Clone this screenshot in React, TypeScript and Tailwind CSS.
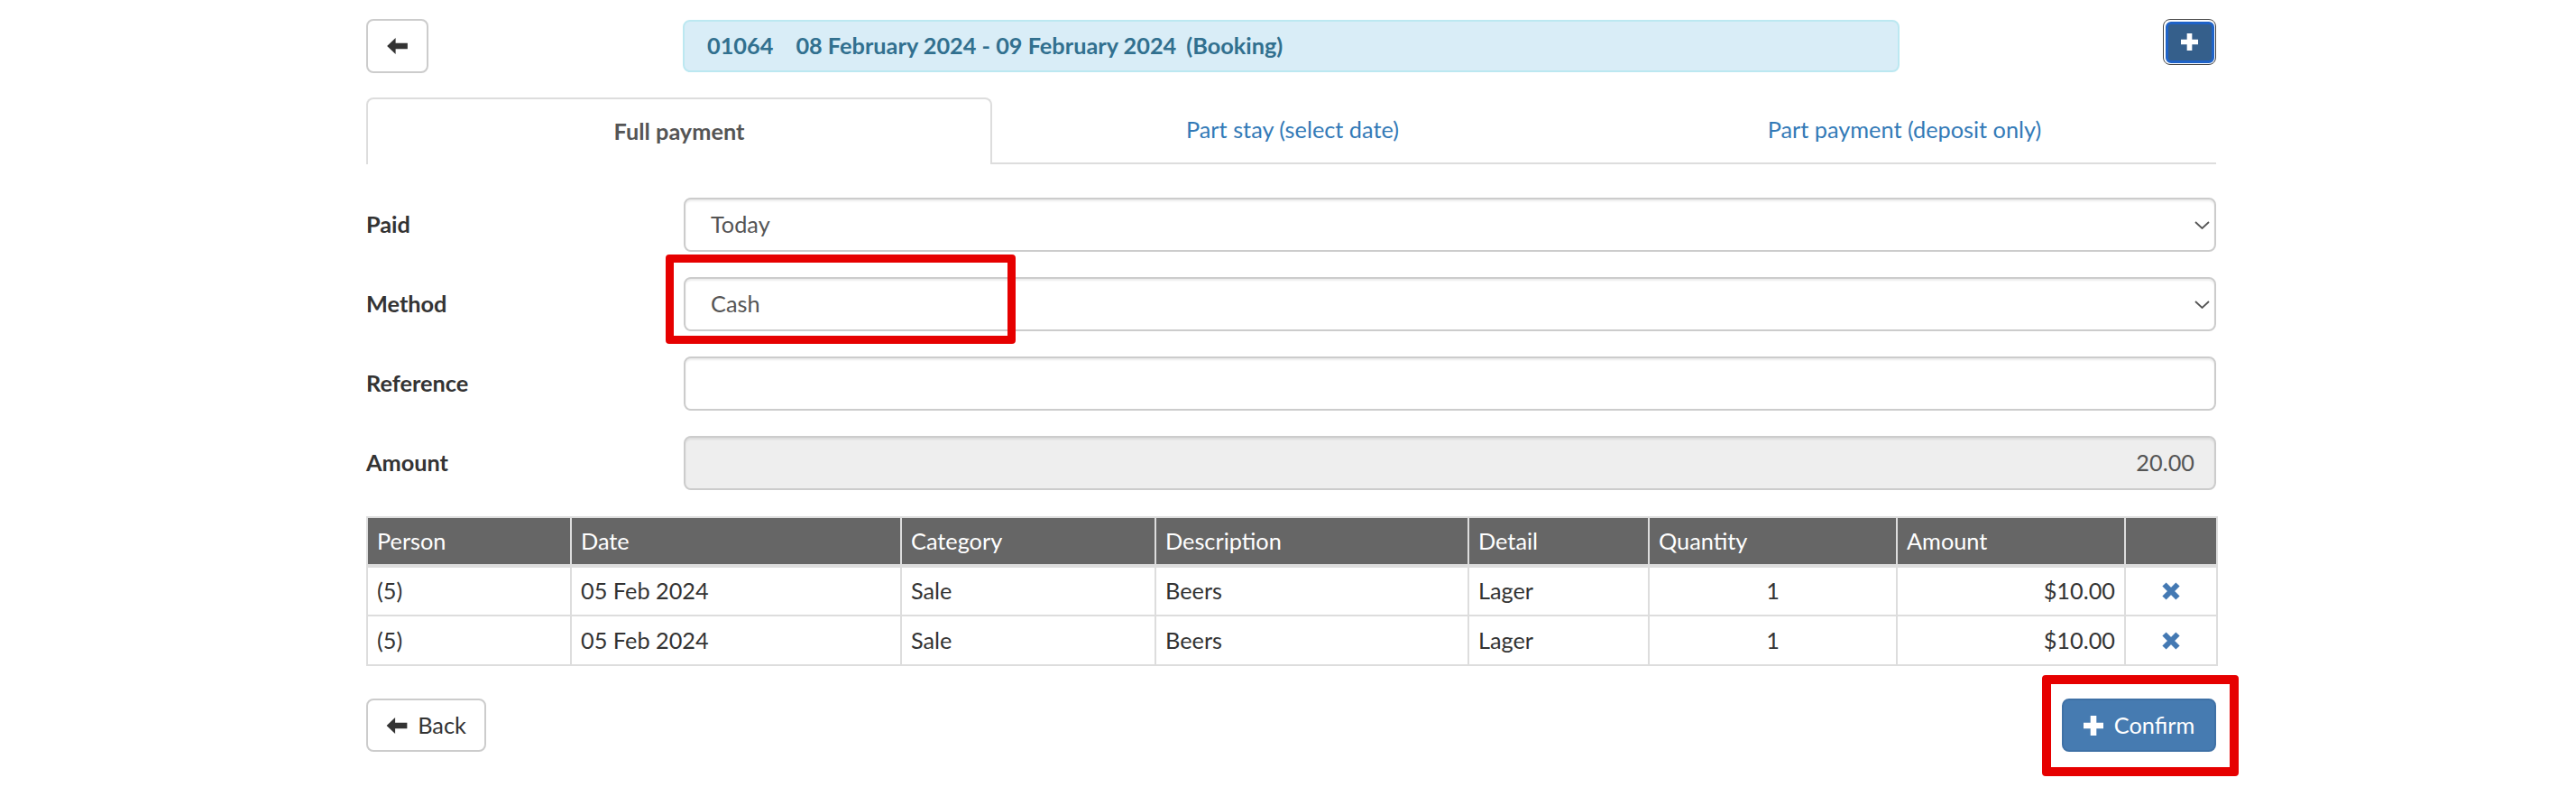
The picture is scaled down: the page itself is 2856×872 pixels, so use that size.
import React from "react";

const rows = [
  { person: "(5)", date: "05 Feb 2024", category: "Sale", description: "Beers", detail: "Lager", quantity: "1", amount: "$10.00" },
  { person: "(5)", date: "05 Feb 2024", category: "Sale", description: "Beers", detail: "Lager", quantity: "1", amount: "$10.00" },
];

function ArrowLeft({ className }: { className?: string }) {
  return (
    <svg viewBox="0 0 24 19" className={className} fill="currentColor">
      <path d="M0 9.5 L10 0 L10 6 L24 6 L24 13 L10 13 L10 19 Z" />
    </svg>
  );
}

function PlusIcon({ className }: { className?: string }) {
  return (
    <svg viewBox="0 0 20 20" className={className} fill="currentColor">
      <path d="M7 0 H13 V7 H20 V13 H13 V20 H7 V13 H0 V7 H7 Z" />
    </svg>
  );
}

function RemoveIcon({ className }: { className?: string }) {
  return (
    <svg viewBox="0 0 20 20" className={className} fill="none" stroke="currentColor" strokeWidth="6">
      <path d="M2.5 2.5 L17.5 17.5 M17.5 2.5 L2.5 17.5" />
    </svg>
  );
}

function Chevron() {
  return (
    <svg viewBox="0 0 17 9" className="w-[17px] h-[9px] text-[#555]" fill="none" stroke="currentColor" strokeWidth="1.8">
      <path d="M1 1 L8.5 8 L16 1" />
    </svg>
  );
}

function FormRow({ label, children }: { label: string; children: React.ReactNode }) {
  return (
    <div className="grid grid-cols-[352px_1fr] items-center">
      <div className="font-bold text-[#333]">{label}</div>
      {children}
    </div>
  );
}

const field =
  "h-[60px] border-2 border-[#ccc] rounded-[8px] shadow-[inset_0_2px_2px_rgba(0,0,0,0.075)] flex items-center text-[#555]";

export default function App() {
  return (
    <div className="relative w-[2856px] h-[872px] bg-white font-['Lato','Open_Sans',sans-serif] text-[25.3px] text-[#333] leading-none">
      <div className="ml-[406px] w-[2051px] pt-[21px]">
        {/* top bar */}
        <div className="flex items-start">
          <button className="w-[69px] h-[60px] border-2 border-[#ccc] rounded-[8px] flex items-center justify-center text-[#333]">
            <ArrowLeft className="w-[25px] h-[18px]" />
          </button>
          <div className="ml-[282px] mt-[1px] w-[1349px] h-[58px] bg-[#d9edf7] border-2 border-[#bce8f1] rounded-[8px] flex items-center pl-[25px] font-bold text-[#31708f]">
            <span>01064</span>
            <span className="ml-[25px]">08 February 2024 - 09 February 2024</span>
            <span className="ml-[11px]">(Booking)</span>
          </div>
          <div className="ml-auto w-[59px] h-[51px] border-[1.5px] border-[#444] rounded-[8px] bg-white p-[1.5px]">
            <div className="w-full h-full rounded-[6px] border-[3px] border-[#1f63c8] bg-[#355f8b] flex items-center justify-center text-white">
              <PlusIcon className="w-[19px] h-[19px]" />
            </div>
          </div>
        </div>

        {/* tabs */}
        <div className="mt-[27px] grid grid-cols-[694px_666px_1fr] h-[74px]">
          <div className="border-2 border-b-0 border-[#ddd] rounded-t-[8px] bg-white flex items-center justify-center font-bold text-[#555]">
            Full payment
          </div>
          <div className="border-b-2 border-[#ddd] flex items-center justify-center text-[#337ab7]">
            Part stay (select date)
          </div>
          <div className="border-b-2 border-[#ddd] flex items-center justify-center text-[#337ab7]">
            Part payment (deposit only)
          </div>
        </div>

        {/* form */}
        <div className="mt-[37px] flex flex-col gap-[28px]">
          <FormRow label="Paid">
            <div className={field + " justify-between pl-[28px] pr-[5px]"}>
              <span>Today</span>
              <Chevron />
            </div>
          </FormRow>
          <FormRow label="Method">
            <div className={field + " justify-between pl-[28px] pr-[5px]"}>
              <span>Cash</span>
              <Chevron />
            </div>
          </FormRow>
          <FormRow label="Reference">
            <div className={field + " pl-[28px]"} />
          </FormRow>
          <FormRow label="Amount">
            <div className={field + " justify-end pr-[22px] bg-[#eee]"}>
              <span>20.00</span>
            </div>
          </FormRow>
        </div>

        {/* table */}
        <table className="mt-[29px] w-[2051px] table-fixed border-collapse border-2 border-[#ddd]">
          <colgroup>
            <col className="w-[226px]" />
            <col className="w-[366px]" />
            <col className="w-[282px]" />
            <col className="w-[347px]" />
            <col className="w-[200px]" />
            <col className="w-[275px]" />
            <col className="w-[253px]" />
            <col className="w-[102px]" />
          </colgroup>
          <thead>
            <tr className="bg-[#666] text-white h-[54px] border-b-[4px] border-[#ddd]">
              {["Person", "Date", "Category", "Description", "Detail", "Quantity", "Amount", ""].map((h, i) => (
                <th key={i} className="font-normal text-left px-[10px] border-x-2 border-[#ddd]">
                  {h}
                </th>
              ))}
            </tr>
          </thead>
          <tbody>
            {rows.map((r, i) => (
              <tr key={i} className="h-[55px] border-b-2 border-[#ddd]">
                <td className="px-[10px] border-x-2 border-[#ddd]">{r.person}</td>
                <td className="px-[10px] border-x-2 border-[#ddd]">{r.date}</td>
                <td className="px-[10px] border-x-2 border-[#ddd]">{r.category}</td>
                <td className="px-[10px] border-x-2 border-[#ddd]">{r.description}</td>
                <td className="px-[10px] border-x-2 border-[#ddd]">{r.detail}</td>
                <td className="px-[10px] border-x-2 border-[#ddd] text-center">{r.quantity}</td>
                <td className="px-[10px] border-x-2 border-[#ddd] text-right">{r.amount}</td>
                <td className="px-[10px] border-x-2 border-[#ddd]">
                  <div className="flex justify-center text-[#4479b3]">
                    <RemoveIcon className="w-[20px] h-[20px]" />
                  </div>
                </td>
              </tr>
            ))}
          </tbody>
        </table>

        {/* bottom buttons */}
        <div className="mt-[36px] flex items-center justify-between">
          <button className="w-[133px] h-[59px] border-2 border-[#ccc] rounded-[8px] bg-white flex items-center justify-center gap-[11px] text-[#333]">
            <ArrowLeft className="w-[24px] h-[18px]" />
            <span>Back</span>
          </button>
          <button className="w-[171px] h-[59px] rounded-[8px] bg-[#467bb1] border-2 border-[#3f71a6] flex items-center justify-center gap-[12px] text-white">
            <PlusIcon className="w-[22px] h-[22px]" />
            <span>Confirm</span>
          </button>
        </div>
      </div>

      {/* annotation boxes */}
      <div className="absolute left-[738px] top-[282px] w-[388px] h-[99px] border-[9px] border-[#e60000] rounded-[4px]" />
      <div className="absolute left-[2264px] top-[748px] w-[218px] h-[112px] border-[10px] border-[#e60000] rounded-[4px]" />
    </div>
  );
}
